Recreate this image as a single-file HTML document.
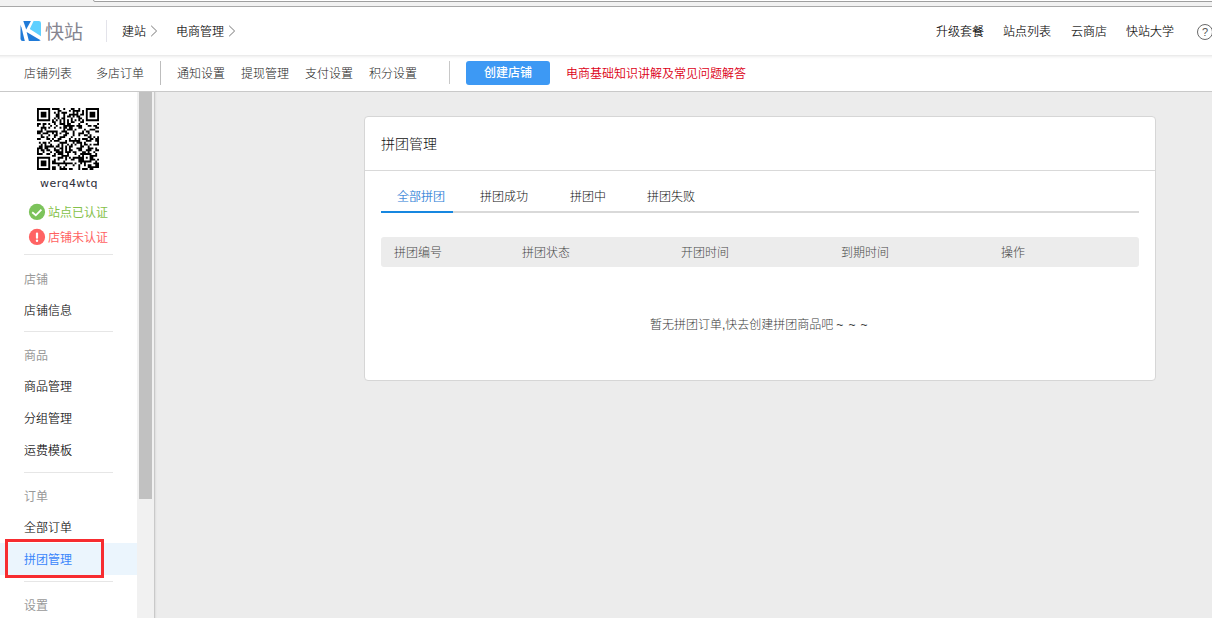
<!DOCTYPE html>
<html lang="zh-CN">
<head>
<meta charset="utf-8">
<title>拼团管理</title>
<style>
*{box-sizing:border-box;margin:0;padding:0}
html,body{width:1212px;height:618px;overflow:hidden;background:#fff}
body{position:relative;font-family:"Liberation Sans","Noto Sans CJK SC",sans-serif;font-size:12px;color:#222;line-height:1;font-weight:300}
.abs{position:absolute;white-space:nowrap}
/* browser chrome strip */
#chrome{left:0;top:0;width:1212px;height:7px;background:#f2f2f2;border-bottom:1px solid #a9a9a9}
#addr{left:93px;top:-4px;width:1130px;height:6px;background:#fff;border:1px solid #9f9f9f;border-radius:2px}
/* header */
#header{left:0;top:7px;width:1212px;height:48px;background:#fff}
#hshadow{left:0;top:55px;width:1212px;height:4px;background:linear-gradient(#ebebeb 0,#ebebeb 25%,#f3f3f3 25%,#f3f3f3 50%,#f9f9f9 50%,#f9f9f9 75%,#fdfdfd 75%)}
.t{position:absolute;white-space:nowrap;height:16px;line-height:16px;font-size:12px}
#logoText{left:45px;top:21px;font-size:19px;height:24px;line-height:24px;color:#858590;font-weight:400}
.vd{position:absolute;width:1px}
.chev{position:absolute;width:8px;height:12px}
.h{font-weight:300;color:#000;-webkit-text-stroke:0.1px #000}
/* subnav */
#subnav{left:0;top:56px;width:1212px;height:36px;background:#fff;border-bottom:1px solid #c9c9c9}
#btn{left:466px;top:61px;width:84px;height:24px;background:#3d99f4;border-radius:3px;color:#fff;text-align:center;line-height:24px;font-weight:500}
/* content */
#content{left:154px;top:92px;width:1058px;height:526px;background:linear-gradient(90deg,#c9c9c9 0,#c9c9c9 1px,#e1e1e1 1px,#e1e1e1 2px,#e9e9e9 2px,#e9e9e9 3px,#ececec 3px)}
#sidebar{left:0;top:92px;width:137px;height:526px;background:#fff}
#track{left:137px;top:92px;width:17px;height:526px;background:#f1f1f1}
#thumb{left:139px;top:92px;width:13px;height:407px;background:#c1c1c1}
.sdiv{position:absolute;left:24px;width:89px;height:1px;background:#e6e6e6}
.lab{color:#999;font-weight:400}
.si{font-weight:300;color:#000;-webkit-text-stroke:0.1px #000}
#hl{left:0;top:543px;width:137px;height:32px;background:#ebf5fd}
#redbox{left:5px;top:539px;width:99px;height:39px;border:3px solid #f72c30}
/* card */
#card{left:364px;top:116px;width:792px;height:265px;background:#fff;border:1px solid #d6d6d6;border-radius:4px}
#cardhr{left:365px;top:170px;width:790px;height:1px;background:#d9d9d9}
#tabline{left:381px;top:211px;width:758px;height:2px;background:#d9d9d9}
#tabact{left:381px;top:211px;width:72px;height:2px;background:#1787e0}
#thead{left:381px;top:237px;width:758px;height:30px;background:#ececec;border-radius:3px}
.th{color:#484848}
</style>
</head>
<body>
<!-- browser chrome strip -->
<div id="chrome" class="abs"></div>
<div id="addr" class="abs"></div>

<!-- header -->
<div id="header" class="abs"></div>
<svg class="abs" style="left:20px;top:21px" width="21" height="20" viewBox="0 0 21 20">
  <defs><clipPath id="kc"><rect x="0.5" y="0" width="20.5" height="20" rx="2.2" ry="2.2"/></clipPath></defs>
  <g clip-path="url(#kc)">
    <polygon points="0,3.6 1.5,6.6 4.8,20 0,20" fill="#1f7ad8"/>
    <polygon points="3.3,0 10.9,0 6.2,8.4" fill="#1f7ad8"/>
    <polygon points="13.6,0 21,0 21,15.2 9.8,8.1" fill="#5fd0ff"/>
    <polygon points="6.6,10.9 21,19.6 21,20 8.9,20" fill="#1f7ad8"/>
  </g>
</svg>
<div id="logoText" class="abs">快站</div>
<div class="vd" style="left:106px;top:20px;height:22px;background:#e3e3ea"></div>
<div class="t h" style="left:122px;top:24px">建站</div>
<svg class="chev" style="left:150px;top:25px" viewBox="0 0 8 12"><polyline points="1.2,0.8 6.6,6 1.2,11.2" fill="none" stroke="#777" stroke-width="1"/></svg>
<div class="t h" style="left:176px;top:24px">电商管理</div>
<svg class="chev" style="left:228px;top:25px" viewBox="0 0 8 12"><polyline points="1.2,0.8 6.6,6 1.2,11.2" fill="none" stroke="#777" stroke-width="1"/></svg>

<div class="t h" style="left:936px;top:24px">升级套餐</div>
<div class="t h" style="left:1003px;top:24px">站点列表</div>
<div class="t h" style="left:1071px;top:24px">云商店</div>
<div class="t h" style="left:1126px;top:24px">快站大学</div>
<div class="abs" style="left:1197px;top:24px;width:16px;height:16px;border:1px solid #6a6a6a;border-radius:50%;text-align:center;line-height:14px;font-size:11px;font-weight:400;color:#555">?</div>

<!-- subnav -->
<div id="subnav" class="abs"></div>
<div id="hshadow" class="abs"></div>
<div class="t" style="left:24px;top:66px">店铺列表</div>
<div class="t" style="left:96px;top:66px">多店订单</div>
<div class="vd" style="left:160px;top:61px;height:24px;background:#bdbdbd"></div>
<div class="t" style="left:177px;top:66px">通知设置</div>
<div class="t" style="left:241px;top:66px">提现管理</div>
<div class="t" style="left:305px;top:66px">支付设置</div>
<div class="t" style="left:369px;top:66px">积分设置</div>
<div class="vd" style="left:449px;top:61px;height:23px;background:#c8c8c8"></div>
<div id="btn" class="abs">创建店铺</div>
<div class="t" style="left:566px;top:66px;color:#dc0015;font-weight:350">电商基础知识讲解及常见问题解答</div>

<!-- content bg -->
<div id="content" class="abs"></div>

<!-- sidebar -->
<div id="sidebar" class="abs"></div>
<div id="track" class="abs"></div>
<div id="thumb" class="abs"></div>

<svg id="qr" class="abs" style="left:37px;top:108px" width="62" height="62" viewBox="0 0 33 33"><rect width="33" height="33" fill="#fff"/><path fill="#000" d="M0 0h7v1h-7zM8 0h4v1h-4zM14 0h1v1h-1zM18 0h2v1h-2zM22 0h1v1h-1zM26 0h7v1h-7zM0 1h1v1h-1zM6 1h1v1h-1zM11 1h2v1h-2zM17 1h1v1h-1zM19 1h4v1h-4zM24 1h1v1h-1zM26 1h1v1h-1zM32 1h1v1h-1zM0 2h1v1h-1zM2 2h3v1h-3zM6 2h1v1h-1zM9 2h1v1h-1zM11 2h1v1h-1zM13 2h3v1h-3zM19 2h1v1h-1zM21 2h1v1h-1zM24 2h1v1h-1zM26 2h1v1h-1zM28 2h3v1h-3zM32 2h1v1h-1zM0 3h1v1h-1zM2 3h3v1h-3zM6 3h1v1h-1zM10 3h2v1h-2zM14 3h1v1h-1zM17 3h5v1h-5zM23 3h2v1h-2zM26 3h1v1h-1zM28 3h3v1h-3zM32 3h1v1h-1zM0 4h1v1h-1zM2 4h3v1h-3zM6 4h1v1h-1zM10 4h2v1h-2zM14 4h1v1h-1zM16 4h2v1h-2zM19 4h1v1h-1zM21 4h2v1h-2zM26 4h1v1h-1zM28 4h3v1h-3zM32 4h1v1h-1zM0 5h1v1h-1zM6 5h1v1h-1zM9 5h1v1h-1zM11 5h1v1h-1zM13 5h2v1h-2zM18 5h1v1h-1zM22 5h2v1h-2zM26 5h1v1h-1zM32 5h1v1h-1zM0 6h7v1h-7zM8 6h1v1h-1zM10 6h1v1h-1zM12 6h1v1h-1zM14 6h1v1h-1zM16 6h1v1h-1zM18 6h1v1h-1zM20 6h1v1h-1zM22 6h1v1h-1zM24 6h1v1h-1zM26 6h7v1h-7zM8 7h2v1h-2zM12 7h1v1h-1zM14 7h1v1h-1zM16 7h1v1h-1zM18 7h2v1h-2zM23 7h2v1h-2zM0 8h2v1h-2zM3 8h2v1h-2zM6 8h1v1h-1zM9 8h1v1h-1zM12 8h3v1h-3zM16 8h2v1h-2zM22 8h1v1h-1zM26 8h1v1h-1zM32 8h1v1h-1zM0 9h1v1h-1zM3 9h1v1h-1zM7 9h1v1h-1zM10 9h1v1h-1zM14 9h6v1h-6zM21 9h3v1h-3zM27 9h2v1h-2zM30 9h2v1h-2zM2 10h3v1h-3zM6 10h1v1h-1zM9 10h1v1h-1zM12 10h1v1h-1zM14 10h2v1h-2zM17 10h2v1h-2zM22 10h2v1h-2zM31 10h2v1h-2zM2 11h1v1h-1zM4 11h1v1h-1zM14 11h1v1h-1zM16 11h3v1h-3zM20 11h1v1h-1zM25 11h1v1h-1zM28 11h3v1h-3zM0 12h3v1h-3zM5 12h6v1h-6zM13 12h3v1h-3zM19 12h1v1h-1zM24 12h1v1h-1zM26 12h2v1h-2zM31 12h2v1h-2zM0 13h2v1h-2zM3 13h3v1h-3zM8 13h1v1h-1zM10 13h1v1h-1zM12 13h1v1h-1zM15 13h2v1h-2zM19 13h1v1h-1zM22 13h3v1h-3zM27 13h1v1h-1zM2 14h1v1h-1zM6 14h1v1h-1zM9 14h2v1h-2zM14 14h2v1h-2zM19 14h1v1h-1zM22 14h1v1h-1zM25 14h2v1h-2zM28 14h1v1h-1zM2 15h2v1h-2zM5 15h1v1h-1zM9 15h1v1h-1zM12 15h3v1h-3zM18 15h1v1h-1zM27 15h2v1h-2zM30 15h1v1h-1zM32 15h1v1h-1zM0 16h2v1h-2zM5 16h2v1h-2zM8 16h1v1h-1zM11 16h2v1h-2zM17 16h1v1h-1zM20 16h1v1h-1zM22 16h1v1h-1zM24 16h3v1h-3zM28 16h2v1h-2zM31 16h2v1h-2zM7 17h1v1h-1zM9 17h3v1h-3zM15 17h1v1h-1zM17 17h6v1h-6zM26 17h3v1h-3zM31 17h2v1h-2zM1 18h1v1h-1zM3 18h2v1h-2zM6 18h1v1h-1zM12 18h4v1h-4zM19 18h1v1h-1zM21 18h3v1h-3zM25 18h1v1h-1zM32 18h1v1h-1zM2 19h1v1h-1zM4 19h1v1h-1zM7 19h1v1h-1zM11 19h1v1h-1zM13 19h1v1h-1zM16 19h1v1h-1zM18 19h1v1h-1zM20 19h1v1h-1zM23 19h1v1h-1zM25 19h2v1h-2zM28 19h1v1h-1zM30 19h3v1h-3zM1 20h2v1h-2zM4 20h5v1h-5zM10 20h2v1h-2zM13 20h1v1h-1zM15 20h1v1h-1zM17 20h2v1h-2zM23 20h2v1h-2zM27 20h1v1h-1zM0 21h3v1h-3zM4 21h2v1h-2zM9 21h1v1h-1zM12 21h2v1h-2zM15 21h1v1h-1zM17 21h1v1h-1zM21 21h3v1h-3zM27 21h3v1h-3zM31 21h1v1h-1zM0 22h1v1h-1zM2 22h2v1h-2zM5 22h2v1h-2zM9 22h3v1h-3zM13 22h1v1h-1zM15 22h1v1h-1zM17 22h2v1h-2zM22 22h2v1h-2zM26 22h3v1h-3zM31 22h2v1h-2zM0 23h1v1h-1zM3 23h1v1h-1zM7 23h1v1h-1zM10 23h4v1h-4zM15 23h3v1h-3zM19 23h2v1h-2zM24 23h2v1h-2zM27 23h1v1h-1zM30 23h1v1h-1zM0 24h3v1h-3zM5 24h2v1h-2zM9 24h1v1h-1zM11 24h3v1h-3zM16 24h1v1h-1zM20 24h1v1h-1zM23 24h6v1h-6zM31 24h1v1h-1zM8 25h2v1h-2zM13 25h4v1h-4zM22 25h1v1h-1zM24 25h1v1h-1zM28 25h4v1h-4zM0 26h7v1h-7zM11 26h3v1h-3zM15 26h1v1h-1zM17 26h1v1h-1zM19 26h6v1h-6zM26 26h1v1h-1zM28 26h2v1h-2zM0 27h1v1h-1zM6 27h1v1h-1zM9 27h1v1h-1zM11 27h1v1h-1zM15 27h1v1h-1zM18 27h2v1h-2zM22 27h3v1h-3zM28 27h3v1h-3zM32 27h1v1h-1zM0 28h1v1h-1zM2 28h3v1h-3zM6 28h1v1h-1zM8 28h2v1h-2zM14 28h1v1h-1zM22 28h7v1h-7zM31 28h1v1h-1zM0 29h1v1h-1zM2 29h3v1h-3zM6 29h1v1h-1zM8 29h11v1h-11zM20 29h1v1h-1zM23 29h1v1h-1zM25 29h1v1h-1zM30 29h3v1h-3zM0 30h1v1h-1zM2 30h3v1h-3zM6 30h1v1h-1zM11 30h1v1h-1zM15 30h1v1h-1zM19 30h1v1h-1zM22 30h1v1h-1zM25 30h1v1h-1zM27 30h2v1h-2zM31 30h2v1h-2zM0 31h1v1h-1zM6 31h1v1h-1zM8 31h2v1h-2zM12 31h1v1h-1zM14 31h1v1h-1zM22 31h1v1h-1zM27 31h6v1h-6zM0 32h7v1h-7zM8 32h2v1h-2zM12 32h4v1h-4zM17 32h2v1h-2zM22 32h1v1h-1zM24 32h3v1h-3zM28 32h2v1h-2z"/></svg>
<div class="t" style="left:40px;top:176px;font-family:'DejaVu Sans',sans-serif;font-size:11px;letter-spacing:0.45px;font-weight:400;color:#2e2e3a">werq4wtq</div>

<svg class="abs" style="left:27px;top:203px" width="19" height="19" viewBox="0 0 19 19"><circle cx="10" cy="8.95" r="8.1" fill="#7cc35b"/><polyline points="5.2,9.3 8.8,12.3 14.4,6.6" fill="none" stroke="#fff" stroke-width="1.8"/></svg>
<div class="t" style="left:48px;top:205px;color:#85c14a;font-weight:400">站点已认证</div>
<svg class="abs" style="left:27px;top:228px" width="19" height="19" viewBox="0 0 19 19"><circle cx="10" cy="8.95" r="8.1" fill="#ff6363"/><rect x="8.9" y="4.4" width="2.2" height="6.4" rx="1" fill="#fff"/><circle cx="10" cy="12.8" r="1.2" fill="#fff"/></svg>
<div class="t" style="left:48px;top:230px;color:#ff6262;font-weight:400">店铺未认证</div>

<div class="sdiv" style="top:254px"></div>
<div class="t lab" style="left:24px;top:272px">店铺</div>
<div class="t si" style="left:24px;top:303px">店铺信息</div>
<div class="sdiv" style="top:331px"></div>
<div class="t lab" style="left:24px;top:348px">商品</div>
<div class="t si" style="left:24px;top:379px">商品管理</div>
<div class="t si" style="left:24px;top:411px">分组管理</div>
<div class="t si" style="left:24px;top:443px">运费模板</div>
<div class="sdiv" style="top:472px"></div>
<div class="t lab" style="left:24px;top:489px">订单</div>
<div class="t si" style="left:24px;top:520px">全部订单</div>
<div id="hl" class="abs"></div>
<div class="t" style="left:24px;top:552px;color:#3a86fb;font-weight:400">拼团管理</div>
<div class="sdiv" style="top:581px"></div>
<div class="t lab" style="left:24px;top:598px">设置</div>
<div id="redbox" class="abs"></div>

<!-- card -->
<div id="card" class="abs"></div>
<div class="t" style="left:381px;top:135px;font-size:14px;height:18px;line-height:18px;font-weight:300;color:#111">拼团管理</div>
<div id="cardhr" class="abs"></div>
<div class="t" style="left:397px;top:189px;color:#1f7bd6;font-weight:300;-webkit-text-stroke:0.15px #1f7bd6">全部拼团</div>
<div class="t" style="left:480px;top:189px;font-weight:300;color:#111">拼团成功</div>
<div class="t" style="left:570px;top:189px;font-weight:300;color:#111">拼团中</div>
<div class="t" style="left:647px;top:189px;font-weight:300;color:#111">拼团失败</div>
<div id="tabline" class="abs"></div>
<div id="tabact" class="abs"></div>
<div id="thead" class="abs"></div>
<div class="t th" style="left:394px;top:245px">拼团编号</div>
<div class="t th" style="left:522px;top:245px">拼团状态</div>
<div class="t th" style="left:681px;top:245px">开团时间</div>
<div class="t th" style="left:841px;top:245px">到期时间</div>
<div class="t th" style="left:1001px;top:245px">操作</div>
<div class="t" style="left:650px;top:317px;color:#3a3a3a">暂无拼团订单,快去创建拼团商品吧<span style="margin-left:3px;letter-spacing:0.85px">~ ~ ~</span></div>

</body>
</html>
